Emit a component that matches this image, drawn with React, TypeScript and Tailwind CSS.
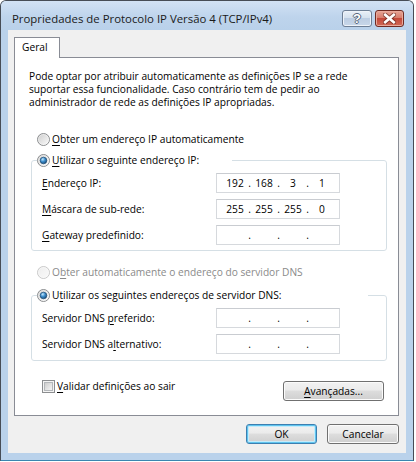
import React from "react";

function Radio({ checked, disabled, id }: { checked?: boolean; disabled?: boolean; id: string }) {
  return (
    <svg width="13" height="13" viewBox="0 0 13 13" className="shrink-0">
      <defs>
        <linearGradient id={`${id}-f`} x1="0" y1="0" x2="1" y2="1">
          <stop offset="0" stopColor={disabled ? "#ededed" : "#cbcbcb"} />
          <stop offset="1" stopColor={disabled ? "#fafafa" : "#fdfdfd"} />
        </linearGradient>
        <radialGradient id={`${id}-d`} cx="0.38" cy="0.32" r="0.75">
          <stop offset="0" stopColor="#c4e8fc" />
          <stop offset="0.45" stopColor="#3f90cf" />
          <stop offset="1" stopColor="#16456f" />
        </radialGradient>
      </defs>
      <circle cx="6.5" cy="6.5" r="6" fill={`url(#${id}-f)`} stroke={disabled ? "#c9c9c9" : "#8c8e90"} strokeWidth="1" />
      <circle cx="6.5" cy="6.5" r="5" fill="none" stroke="#ffffff" strokeOpacity="0.5" strokeWidth="0.8" />
      {checked && (
        <circle cx="6.5" cy="6.5" r="3.3" fill={`url(#${id}-d)`} stroke="#1a4a74" strokeWidth="0.7" />
      )}
    </svg>
  );
}

function Checkbox() {
  return (
    <svg width="13" height="13" viewBox="0 0 13 13" className="shrink-0">
      <defs>
        <linearGradient id="cb-f" x1="0" y1="0" x2="1" y2="1">
          <stop offset="0" stopColor="#cbcbcb" />
          <stop offset="1" stopColor="#f7f7f7" />
        </linearGradient>
      </defs>
      <rect x="0.5" y="0.5" width="12" height="12" fill="#f4f4f4" stroke="#8c8e90" />
      <rect x="2.5" y="2.5" width="8" height="8" fill="url(#cb-f)" stroke="#b4b7ba" strokeWidth="1" />
    </svg>
  );
}

function IpBox({ v }: { v?: string[] }) {
  const o = v ?? ["", "", "", ""];
  return (
    <div className="w-[124px] h-[20px] shrink-0 border border-[#d6d9dd] border-t-[#c9ccd1] bg-white grid grid-cols-[22px_7px_22px_7px_22px_7px_22px] pl-[7px] items-center leading-[18px]">
      <span className="text-center">{o[0]}</span>
      <span className="text-center">.</span>
      <span className="text-center">{o[1]}</span>
      <span className="text-center">.</span>
      <span className="text-center">{o[2]}</span>
      <span className="text-center">.</span>
      <span className="text-center">{o[3]}</span>
    </div>
  );
}

const btn =
  "h-[20px] rounded-[3px] border border-[#707070] bg-[linear-gradient(#f2f2f2,#ebebeb_45%,#dddddd_50%,#cfcfcf)] shadow-[inset_0_0_0_1px_#fbfbfb] flex items-center justify-center leading-[13px]";

export default function App() {
  return (
    <div className="w-[416px] h-[462px] bg-white font-['Open_Sans',sans-serif] text-[10.2px] leading-[13px] text-black">
      <div className="w-[414px] h-[461px] border border-[#474d56] border-b-[#3a86b0] rounded-t-[6px] bg-[#bad2eb] flex flex-col overflow-hidden">
        {/* Title bar */}
        <div className="h-[29px] shrink-0 flex items-start pl-[11px] pr-[9px] bg-[linear-gradient(#d2e2f4,#bed4ec_55%,#b9d1ea)]">
          <span className="mt-[10px] text-[11.4px] leading-[16px] text-[#1a1a1a] whitespace-nowrap">
            Propriedades de Protocolo IP Versão 4 (TCP/IPv4)
          </span>
          <div className="ml-auto mt-[9px] flex gap-[3px]">
            <div className="w-[30px] h-[17px] rounded-[3px] border border-[#6d7e94] bg-[linear-gradient(#e9f0f8,#d5e1ee_45%,#bccde2_50%,#c8d7e9)] shadow-[inset_0_0_0_1px_#eef3f9] flex items-center justify-center">
              <span className="font-['Liberation_Sans',sans-serif] font-bold text-[13px] leading-[13px] text-white [text-shadow:-1px_0_#56657a,1px_0_#56657a,0_-1px_#56657a,0_1px_#56657a]">
                ?
              </span>
            </div>
            <div className="w-[29px] h-[17px] rounded-[3px] border border-[#6f2a22] bg-[linear-gradient(#e7a596,#d77d6d_45%,#c4493a_50%,#d06a57)] shadow-[inset_0_0_0_1px_#e9a99b] flex items-center justify-center">
              <svg width="13" height="11" viewBox="0 0 13 11">
                <path d="M2.2 1.8 L10.8 9.2 M10.8 1.8 L2.2 9.2" stroke="#5a1e16" strokeOpacity="0.6" strokeWidth="4.6" strokeLinecap="square" />
                <path d="M2.2 1.8 L10.8 9.2 M10.8 1.8 L2.2 9.2" stroke="#ffffff" strokeWidth="2.6" strokeLinecap="square" />
              </svg>
            </div>
          </div>
        </div>

        {/* Client area */}
        <div className="mx-[7px] h-[423px] bg-[#f0f0f0] pt-[7px] pl-[6px] flex flex-col">
          <div className="relative z-10 w-[46px] h-[21px] -mb-px border border-b-0 border-[#898c95] bg-white pl-[7px] pt-[3px]">
            Geral
          </div>
          <div className="w-[385px] h-[359px] shrink-0 border border-[#898c95] bg-white flex flex-col">
            <p className="ml-[14px] mt-[12px] whitespace-nowrap">
              Pode optar por atribuir automaticamente as definições IP se a rede
              <br />
              suportar essa funcionalidade. Caso contrário tem de pedir ao
              <br />
              administrador de rede as definições IP apropriadas.
            </p>

            <div className="ml-[22px] mt-[22px] h-[16px] flex items-center gap-[2px]">
              <Radio id="r1" />
              <span>
                <u className="underline-offset-[2px]">O</u>bter um endereço IP automaticamente
              </span>
            </div>

            <fieldset className="ml-[16px] mt-[5px] w-[356px] self-start border border-[#d5dfe5] rounded-[3px] pl-[10px] pb-[5px]">
              <legend className="ml-[-5px] w-[195px] h-[16px] p-0">
                <span className="flex items-center h-[16px] gap-[2px]">
                  <Radio id="r2" checked />
                  <span>
                    <u className="underline-offset-[2px]">U</u>tilizar o seguinte endereço IP:
                  </span>
                </span>
              </legend>
              <div className="mt-[5px] flex flex-col gap-[6px]">
                <div className="flex items-center h-[20px]">
                  <span className="w-[174px]">
                    <u className="underline-offset-[2px]">E</u>ndereço IP:
                  </span>
                  <IpBox v={["192", "168", "3", "1"]} />
                </div>
                <div className="flex items-center h-[20px]">
                  <span className="w-[174px]">
                    <u className="underline-offset-[2px]">M</u>áscara de sub-rede:
                  </span>
                  <IpBox v={["255", "255", "255", "0"]} />
                </div>
                <div className="flex items-center h-[20px]">
                  <span className="w-[174px]">
                    <u className="underline-offset-[2px]">G</u>ateway predefinido:
                  </span>
                  <IpBox />
                </div>
              </div>
            </fieldset>

            <div className="ml-[22px] mt-[13px] h-[16px] flex items-center gap-[2px] text-[#8a8a8a]">
              <Radio id="r3" disabled />
              <span>
                O<u className="underline-offset-[2px]">b</u>ter automaticamente o endereço do servidor DNS
              </span>
            </div>

            <fieldset className="ml-[16px] mt-[7px] w-[356px] self-start border border-[#d5dfe5] rounded-[3px] pl-[10px] pb-[6px]">
              <legend className="ml-[-5px] w-[331px] h-[16px] p-0">
                <span className="flex items-center h-[16px] gap-[2px]">
                  <Radio id="r4" checked />
                  <span>
                    U<u className="underline-offset-[2px]">t</u>ilizar os seguintes endereços de servidor DNS:
                  </span>
                </span>
              </legend>
              <div className="mt-[5px] flex flex-col gap-[6px]">
                <div className="flex items-center h-[20px]">
                  <span className="w-[174px]">
                    Servidor DNS <u className="underline-offset-[2px]">p</u>referido:
                  </span>
                  <IpBox />
                </div>
                <div className="flex items-center h-[20px]">
                  <span className="w-[174px]">
                    Servidor DNS a<u className="underline-offset-[2px]">l</u>ternativo:
                  </span>
                  <IpBox />
                </div>
              </div>
            </fieldset>

            <div className="mt-[18px] flex items-start justify-between">
              <div className="ml-[27px] h-[14px] flex items-center gap-[2px]">
                <Checkbox />
                <span>
                  <u className="underline-offset-[2px]">V</u>alidar definições ao sair
                </span>
              </div>
              <div className={`${btn} mt-[2px] mr-[14px] w-[101px]`}>
                <span>
                  <u className="underline-offset-[2px]">A</u>vançadas...
                </span>
              </div>
            </div>
          </div>

          <div className="mt-[8px] pr-[7px] flex justify-end gap-[10px]">
            <div className="w-[71px] h-[20px] rounded-[3px] border border-[#3c7fb1] bg-[linear-gradient(#f2f2f2,#ebebeb_45%,#dddddd_50%,#cfcfcf)] shadow-[inset_0_0_0_1px_#5fc4ee,inset_0_0_0_2px_#c4ebfb] flex items-center justify-center leading-[13px]">
              OK
            </div>
            <div className={`${btn} w-[72px]`}>Cancelar</div>
          </div>
        </div>
      </div>
    </div>
  );
}
